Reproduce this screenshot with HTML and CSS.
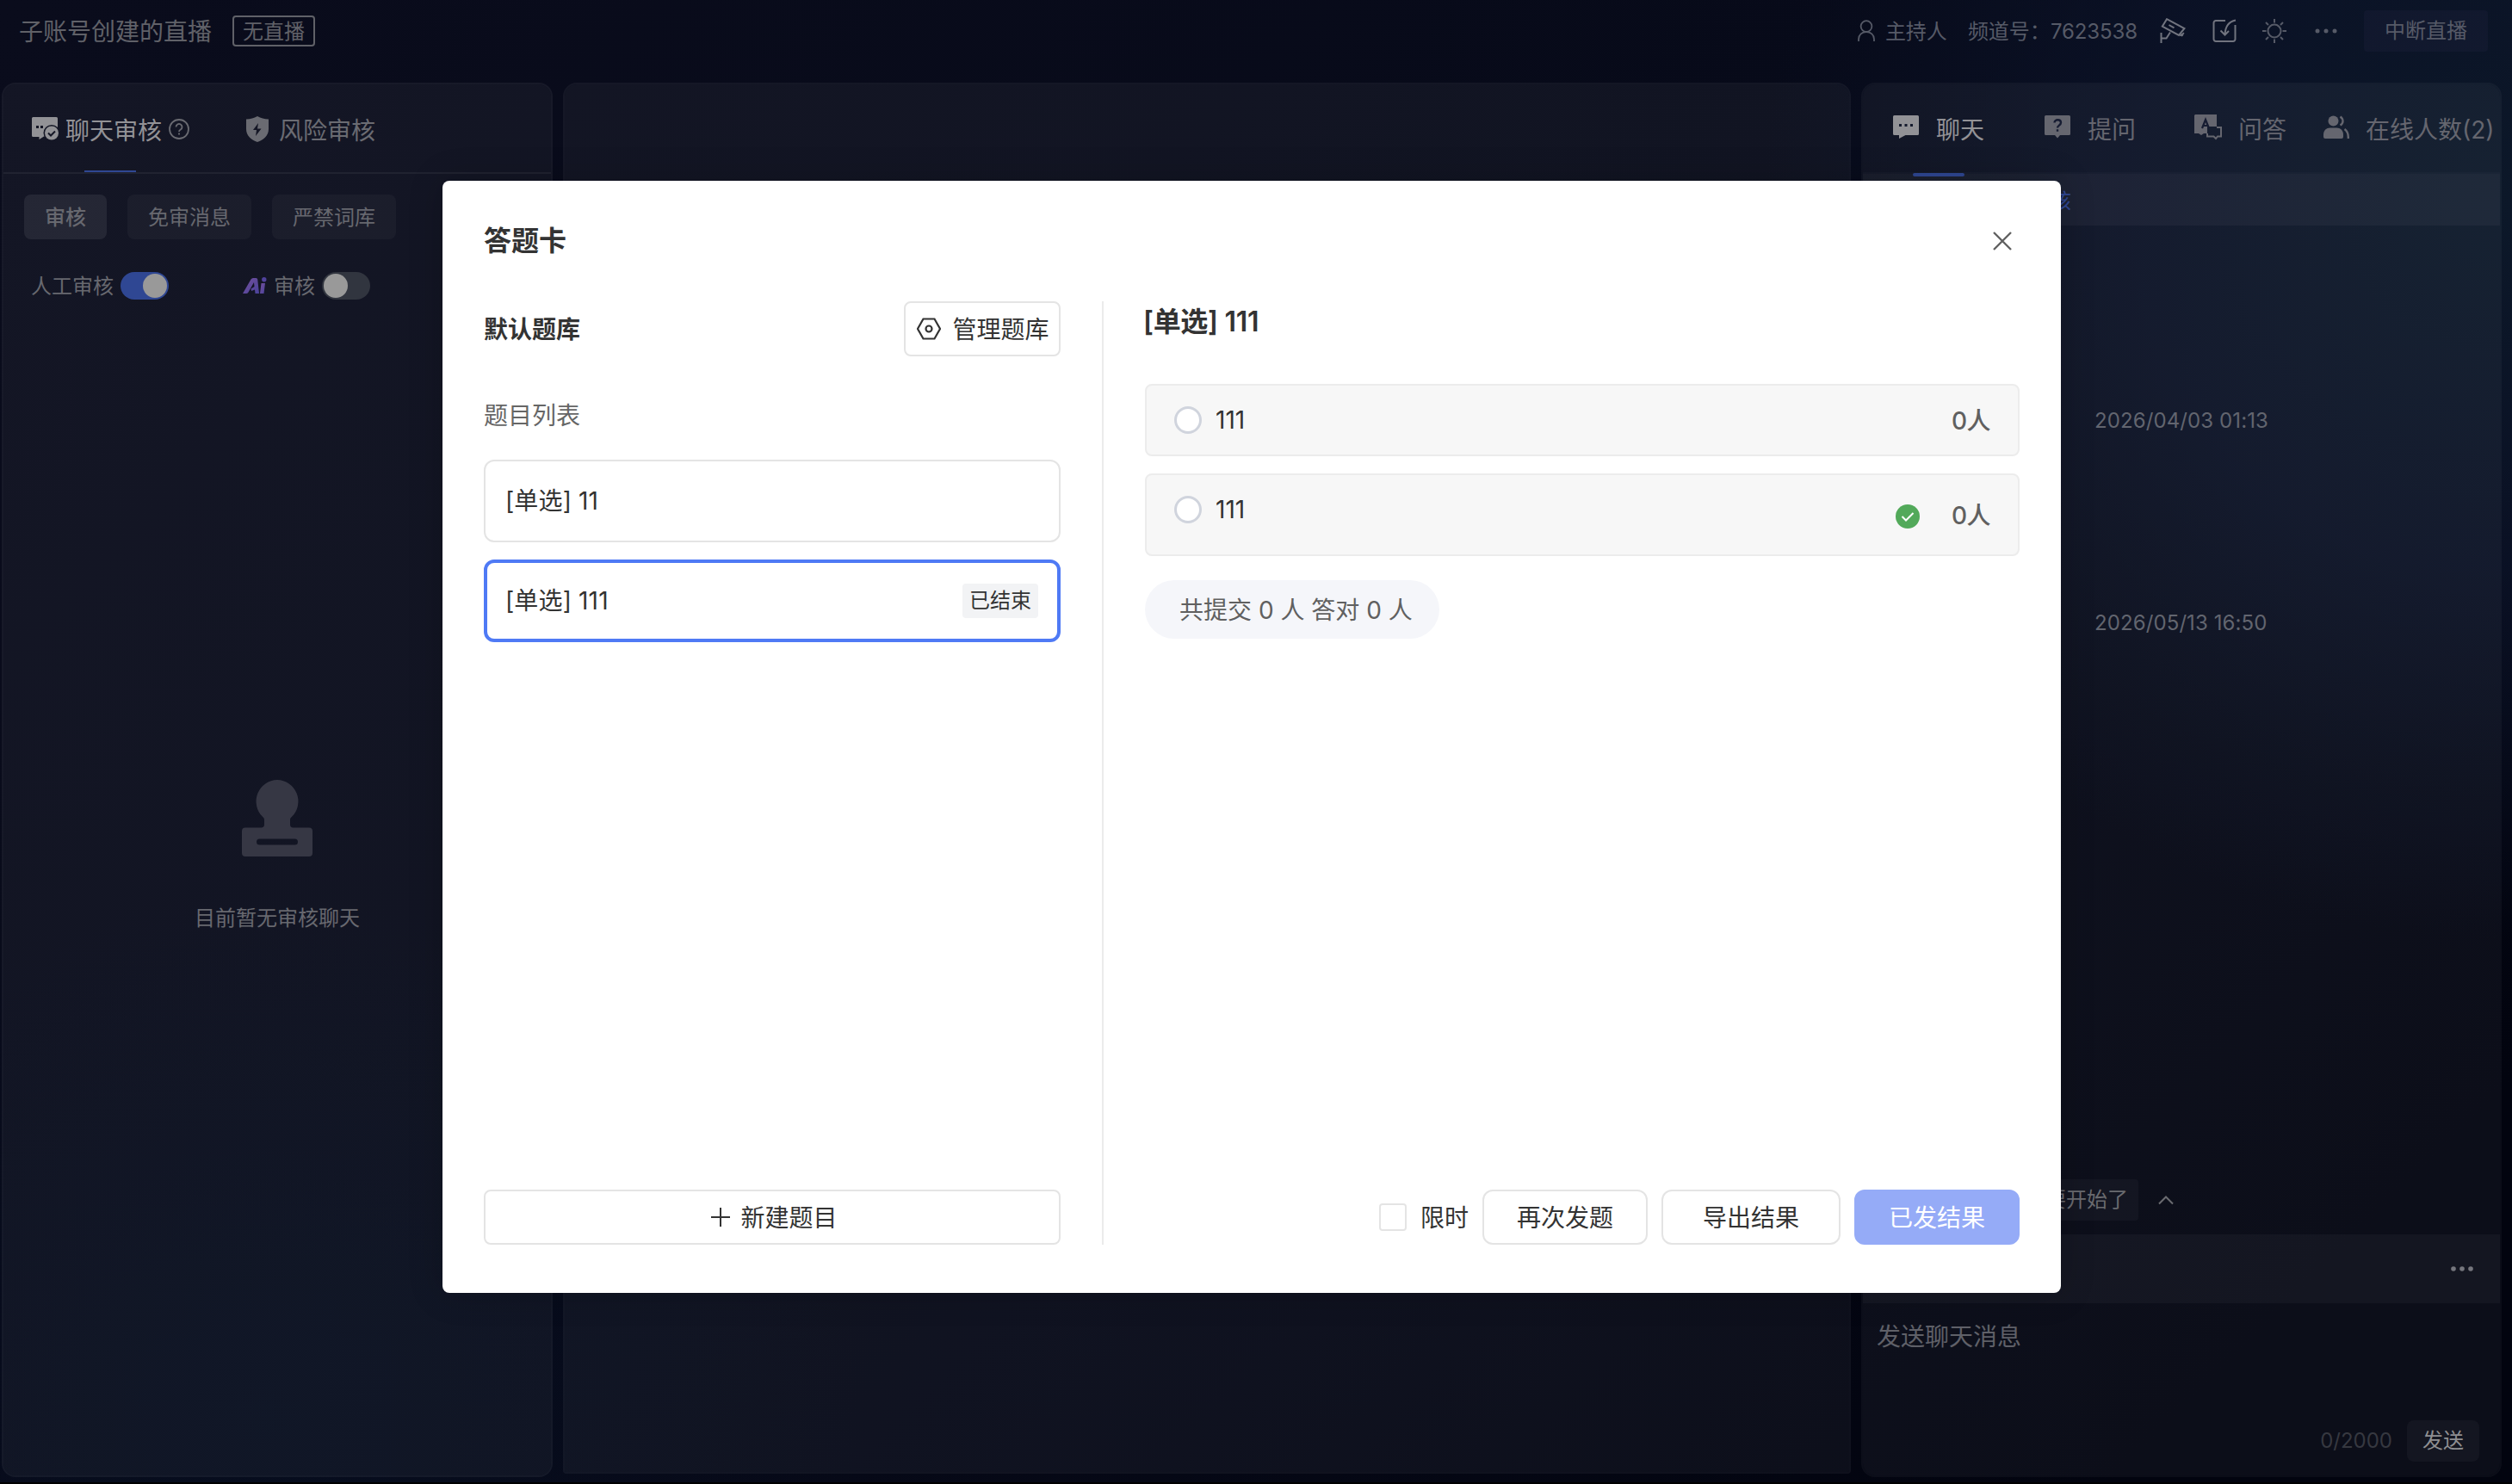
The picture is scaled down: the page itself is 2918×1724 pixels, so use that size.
FILE: index.html
```html
<!DOCTYPE html>
<html lang="zh-CN">
<head>
    <meta charset="UTF-8">
    <meta name="viewport" content="width=device-width, initial-scale=1.0">
    <title>答题卡</title>
    <link rel="stylesheet" href="styles.css">
</head>
<body>
    <div class="page">
        <header class="header">
            <h1 class="live-title">子账号创建的直播</h1>
            <span class="live-status">无直播</span>
            <div class="header-right">
                <svg class="icon-user" width="20" height="26" viewBox="0 0 20 26" fill="none" stroke="currentColor" stroke-width="1.8">
                    <circle cx="10" cy="7.6" r="6.4"/>
                    <path d="M1 25v-2.5c0-5 4-8.5 9-8.5s9 3.5 9 8.5V25"/>
                </svg>
                <span class="host">主持人</span>
                <span class="channel">频道号：<span class="channel-id">7623538</span></span>
                <svg class="icon-camera" width="30" height="30" viewBox="0 0 30 30" fill="none" stroke="currentColor" stroke-width="2">
                    <path d="M8 1.2 28.5 12 22 20 2.8 9.6z"/>
                    <path d="m10.5 8 6 3.4"/>
                    <path d="M1.5 17v12M1.5 23.5h6l4.500-7"/>
                    <path d="m23 20 3 1 2-4z" fill="currentColor" stroke-width="1"/>
                </svg>
                <svg class="icon-import" width="28" height="28" viewBox="0 0 28 28" fill="none" stroke="currentColor" stroke-width="2">
                    <path d="M15 2H4a2.5 2.5 0 0 0-2.5 2.5v19A2.5 2.5 0 0 0 4 26h20a2.5 2.5 0 0 0 2.5-2.5V7"/>
                    <path d="M27 1.5C19 3 15 8 14.5 18M9.5 13.5l5 5 4.5-4.5"/>
                </svg>
                <svg class="icon-sun" width="28" height="28" viewBox="0 0 28 28" fill="none" stroke="currentColor" stroke-width="2">
                    <circle cx="14" cy="14" r="7.5"/>
                    <path d="M14 0v4.5M14 23.5V28M0 14h4.5M23.5 14H28M4 4l3 3M21 21l3 3M24 4l-3 3M7 21l-3 3"/>
                </svg>
                <svg class="icon-more" width="26" height="6" viewBox="0 0 26 6" fill="currentColor">
                    <circle cx="3" cy="3" r="2.5"/><circle cx="13" cy="3" r="2.5"/><circle cx="23" cy="3" r="2.5"/>
                </svg>
                <button class="btn-stop">中断直播</button>
            </div>
        </header>

        <main class="main">
            <section class="panel panel-left">
                <div class="left-tabs">
                    <div class="left-tab active">
                        <svg class="icon-audit" width="32" height="28" viewBox="0 0 32 28">
                            <path fill="currentColor" d="M1.5 0h27A1.5 1.5 0 0 1 30 1.5v21H14L8.5 26v-3h-7A1.5 1.5 0 0 1 0 21.5v-20A1.5 1.5 0 0 1 1.5 0z"/>
                            <path fill="#141625" d="M5 10h3v3H5zM10 10h3v3h-3z"/>
                            <circle cx="23" cy="18.5" r="9.5" fill="#141625"/>
                            <circle cx="23" cy="18.5" r="8" fill="currentColor"/>
                            <path d="m19 18.500 3 3 5-5" fill="none" stroke="#141625" stroke-width="2"/>
                        </svg>
                        <span>聊天审核</span>
                        <svg class="icon-help" width="24" height="24" viewBox="0 0 24 24" fill="none" stroke="currentColor" stroke-width="1.8">
                            <circle cx="12" cy="12" r="11"/>
                            <path d="M8.5 9.5a3.5 3.5 0 1 1 5.3 3C12.5 13.3 12 13.8 12 15M12 16.6v2"/>
                        </svg>
                    </div>
                    <div class="left-tab">
                        <svg class="icon-shield" width="28" height="30" viewBox="0 0 28 30">
                            <path fill="currentColor" d="M14 0c4 2.200 8 3.300 13 3.500V15c0 8-6 12.500-13 15C7 27.500 1 23 1 15V3.500C6 3.300 10 2.200 14 0z"/>
                            <path fill="#141625" d="m15 8-6 8h4l-1 7 6.500-8.500H14z"/>
                        </svg>
                        <span>风险审核</span>
                    </div>
                </div>
                <div class="pills">
                    <span class="pill active">审核</span>
                    <span class="pill">免审消息</span>
                    <span class="pill">严禁词库</span>
                </div>
                <div class="switch-row">
                    <span>人工审核</span>
                    <span class="switch on"></span>
                    <svg class="icon-ai" width="28" height="20" viewBox="0 0 28 20">
                        <defs>
                            <linearGradient id="ai" x1="0" y1="0" x2="1" y2="1">
                                <stop offset="0" stop-color="#74509b"/>
                                <stop offset="1" stop-color="#4a429c"/>
                            </linearGradient>
                        </defs>
                        <g fill="url(#ai)">
                            <path d="M0 19 9.500 2.500Q10.500 1 12 1h3.500Q17 1 17.200 2.500L19 19h-4.500l-.500-4.500L10 16l-.500-2.500L13.500 11 13 6 6.500 17.500Q5.500 19 4 19z"/>
                            <path d="M21.500 7H26l-1.500 12H20z"/>
                        </g>
                        <circle cx="24.800" cy="2.800" r="2.700" fill="#50429c"/>
                    </svg>
                    <span>审核</span>
                    <span class="switch"></span>
                </div>
                <div class="empty">
                    <svg width="82" height="90" viewBox="0 0 82 90" fill="currentColor">
                        <path fill-rule="evenodd" d="M41 0a25 25 0 0 1 17 42.800c-1.500 1.300-2 2.200-2 4V52c0 2 1.300 3.500 3.500 3.500H78a4 4 0 0 1 4 4V85a4 4 0 0 1-4 4H4a4 4 0 0 1-4-4V59.500a4 4 0 0 1 4-4h18.500c2.200 0 3.500-1.500 3.500-3.500v-5.200c0-1.800-.500-2.700-2-4A25 25 0 0 1 41 0zM20.500 68.500a3.500 3.500 0 0 0 0 7h41a3.500 3.500 0 0 0 0-7z"/>
                    </svg>
                    <p>目前暂无审核聊天</p>
                </div>
            </section>

            <section class="panel panel-center"></section>

            <section class="panel panel-right">
                <div class="right-tabs">
                    <div class="right-tab active">
                        <svg width="30" height="28" viewBox="0 0 30 28">
                            <path fill="currentColor" d="M1.500 0h27A1.500 1.500 0 0 1 30 1.500v20a1.500 1.500 0 0 1-1.500 1.500H14.500L7 27v-4H1.500A1.500 1.500 0 0 1 0 21.500v-20A1.500 1.500 0 0 1 1.500 0z"/>
                            <path fill="#151b2e" d="M7 10h3v3H7zM13.500 10h3v3h-3zM20 10h3v3h-3z"/>
                        </svg>
                        <span>聊天</span>
                    </div>
                    <div class="right-tab">
                        <svg width="30" height="28" viewBox="0 0 30 28">
                            <path fill="currentColor" d="M1.500 0h27A1.500 1.500 0 0 1 30 1.500v20a1.500 1.500 0 0 1-1.500 1.500H18l-3 3.500L12 23H1.500A1.500 1.500 0 0 1 0 21.500v-20A1.500 1.500 0 0 1 1.500 0z"/>
                            <path d="M11.500 8.500c0-4.300 7.500-4.300 7.500 0 0 3-4 3.200-4 6M15 16.200v2.600" fill="none" stroke="#161c32" stroke-width="2.400"/>
                        </svg>
                        <span>提问</span>
                    </div>
                    <div class="right-tab">
                        <svg width="32" height="30" viewBox="0 0 32 30">
                            <path fill="currentColor" d="M1 0h25v14H15v8h-4l-3 2-3-2H0V1z"/>
                            <path d="m9 16 4-10 4 10M10.500 13h5" fill="none" stroke="#161c32" stroke-width="2.200"/>
                            <path d="M26 15h5v10.500h-4L25 28l-2.500-2.500H15V22" fill="none" stroke="currentColor" stroke-width="2"/>
                        </svg>
                        <span>问答</span>
                    </div>
                    <div class="right-tab">
                        <svg width="30" height="28" viewBox="0 0 30 28" fill="currentColor">
                            <circle cx="11.500" cy="6.500" r="6"/>
                            <path d="M0 25v-3c0-4.500 3.500-7.500 7.500-7.500h8c4 0 7.500 3 7.500 7.500v3a2 2 0 0 1-2 2H2a2 2 0 0 1-2-2z"/>
                            <path d="M19.500 1.500c4 3 4 7.500 0 10M24.500 16c3 2 4.500 5.500 4.300 11" fill="none" stroke="currentColor" stroke-width="2.400"/>
                        </svg>
                        <span>在线人数(2)</span>
                    </div>
                </div>
                <div class="notice">聊天消息需要审核</div>
                <div class="messages">
                    <time>2026/04/03 01:13</time>
                    <time>2026/05/13 16:50</time>
                    <div class="quick-reply">
                        <span class="quick-chip">直播马上要开始了</span>
                        <svg width="18" height="12" viewBox="0 0 18 12" fill="none" stroke="currentColor" stroke-width="2">
                            <path d="m1 10.500 8-8 8 8"/>
                        </svg>
                    </div>
                </div>
                <div class="toolbar">
                    <svg width="26" height="6" viewBox="0 0 26 6" fill="currentColor">
                        <circle cx="3" cy="3" r="2.800"/><circle cx="13" cy="3" r="2.800"/><circle cx="23" cy="3" r="2.800"/>
                    </svg>
                </div>
                <div class="editor">
                    <p class="placeholder">发送聊天消息</p>
                    <div class="editor-footer">
                        <span class="count">0/2000</span>
                        <button class="btn-send">发送</button>
                    </div>
                </div>
            </section>
        </main>
    </div>

    <div class="dialog">
        <div class="dialog-header">
            <h2>答题卡</h2>
            <svg class="close" width="24" height="24" viewBox="0 0 24 24" fill="none" stroke="currentColor" stroke-width="2.400">
                <path d="m2 2 20 20M22 2 2 22"/>
            </svg>
        </div>
        <div class="dialog-body">
            <div class="question-side">
                <div class="bank-row">
                    <strong>默认题库</strong>
                    <button class="btn btn-manage">
                        <svg width="28" height="26" viewBox="0 0 28 26" fill="none" stroke="currentColor" stroke-width="2.200">
                            <path d="M7.500 1.500h13L27 13l-6.500 11.500h-13L1 13z"/>
                            <circle cx="14" cy="13" r="3.500"/>
                        </svg>
                        <span>管理题库</span>
                    </button>
                </div>
                <div class="list-title">题目列表</div>
                <div class="question">[单选] 11</div>
                <div class="question selected">[单选] 111<span class="tag">已结束</span></div>
                <button class="btn btn-new">
                    <svg width="24" height="24" viewBox="0 0 24 24" fill="none" stroke="currentColor" stroke-width="2">
                        <path d="M12 1v22M1 12h22"/>
                    </svg>
                    <span>新建题目</span>
                </button>
            </div>
            <div class="result-side">
                <h3>[单选] 111</h3>
                <div class="option">
                    <span class="radio"></span>
                    <span class="option-text">111</span>
                    <span class="option-count">0人</span>
                </div>
                <div class="option correct">
                    <span class="radio"></span>
                    <span class="option-text">111</span>
                    <svg class="check" width="28" height="28" viewBox="0 0 28 28">
                        <circle cx="14" cy="14" r="14" fill="#52a95a"/>
                        <path d="m7.500 14 4.500 4.500 8.500-8.500" fill="none" stroke="#fff" stroke-width="2"/>
                    </svg>
                    <span class="option-count">0人</span>
                </div>
                <div class="summary">共提交 0 人 答对 0 人</div>
                <div class="actions">
                    <span class="checkbox"></span>
                    <span class="limit">限时</span>
                    <button class="btn"><span>再次发题</span></button>
                    <button class="btn btn-export"><span>导出结果</span></button>
                    <button class="btn btn-primary"><span>已发结果</span></button>
                </div>
            </div>
        </div>
    </div>
</body>
</html>
```

FILE: styles.css
```css
:root {
    --text: #333;
    --border: #e4e4e4;
    --primary: #4f7af5;
    --dim: #5d5f69;
    --line: rgba(255, 255, 255, 0.06);
}

* {
    margin: 0;
    padding: 0;
    box-sizing: border-box;
}

body {
    font-family: Inter, "Noto Sans CJK SC", sans-serif;
    font-size: 28px;
    line-height: 40px;
    color: var(--text);
    background-color: #05071a;
    overflow: hidden;
}

button {
    font: inherit;
    border: none;
}

svg {
    flex-shrink: 0;
}

.page {
    height: 1724px;
    display: flex;
    flex-direction: column;
    color: var(--dim);
    border-bottom: 2px solid #000;
    background:
        radial-gradient(ellipse 850px 850px at 2900px 240px, #0c1829 0%, rgba(12, 20, 42, 0.75) 50%, transparent 100%),
        radial-gradient(ellipse 700px 600px at 300px 1640px, rgba(6, 14, 32, 0.7) 0%, transparent 100%),
        linear-gradient(135deg, #0a0c1c 0%, #070a19 50%, #02040f 90%);
}

.header {
    height: 96px;
    padding: 12px 28px 36px 22px;
    display: flex;
    align-items: center;
}

.live-title {
    padding-top: 1px;
    font-size: 28px;
    font-weight: 400;
    color: #606168;
}

.live-status {
    margin-left: 24px;
    padding: 0 10px;
    height: 36px;
    line-height: 33px;
    font-size: 24px;
    color: #606168;
    border: 2px solid #606168;
    border-radius: 4px;
}

.header-right {
    margin-left: auto;
    display: flex;
    align-items: center;
    font-size: 24px;
    color: #565a67;
}

.host {
    margin-left: 12px;
    padding-top: 2px;
}

.channel {
    margin-left: 24px;
    padding-top: 2px;
}

.channel-id {
    letter-spacing: -0.1px;
}

.icon-camera {
    margin-left: 26px;
    color: #71747f;
}

.icon-import {
    margin-left: 31px;
    color: #71747f;
}

.icon-sun {
    margin-left: 30px;
}

.icon-more {
    margin-left: 33px;
}

.btn-stop {
    margin-left: 31px;
    width: 144px;
    height: 48px;
    color: #565a67;
    background-color: rgba(60, 50, 90, 0.14);
    border-radius: 4px;
}

.main {
    display: flex;
    align-items: flex-start;
    gap: 12px;
    padding: 0 12px 0 2px;
}

.panel {
    display: flex;
    flex-direction: column;
    border: 2px solid var(--line);
    border-radius: 16px;
    background-color: rgba(255, 255, 255, 0.042);
    background-clip: padding-box;
}

.panel-left {
    width: 640px;
    height: 1620px;
}

.panel-center {
    width: 1496px;
    height: 1616px;
    border-color: rgba(255, 255, 255, 0.05);
    border-radius: 16px 16px 4px 4px;
}

.panel-right {
    width: 744px;
    height: 1620px;
    border-color: rgba(255, 255, 255, 0.04);
}

.left-tabs {
    height: 104px;
    padding-left: 33px;
    display: flex;
    gap: 67px;
    border-bottom: 2px solid var(--line);
}

.left-tab {
    position: relative;
    display: flex;
    align-items: center;
    gap: 9px;
    padding-top: 2px;
    color: #6a6b72;
}

.left-tab span,
.right-tab span {
    padding-top: 3px;
}

.left-tab.active {
    color: #929296;
}

.left-tab.active::after {
    content: "";
    position: absolute;
    left: 61px;
    bottom: 0;
    width: 60px;
    height: 2px;
    background-color: #2f4793;
}

.icon-audit,
.icon-help {
    margin-right: -2px;
}

.icon-help {
    margin-left: -1px;
    color: #6a6b72;
}

.icon-shield {
    margin-right: 2px;
}

.pills {
    display: flex;
    gap: 24px;
    padding: 24px 24px 0;
}

.pill {
    height: 52px;
    padding: 0 24px;
    line-height: 53px;
    font-size: 24px;
    color: #67686f;
    background-color: rgba(255, 255, 255, 0.035);
    border-radius: 8px;
}

.pill.active {
    font-weight: 500;
    background-color: rgba(255, 255, 255, 0.075);
}

.switch-row {
    display: flex;
    align-items: center;
    height: 32px;
    margin-top: 38px;
    padding-left: 32px;
    font-size: 24px;
    color: #67686f;
}

.switch-row span:not(.switch) {
    padding-top: 2px;
}

.switch {
    width: 56px;
    height: 32px;
    margin-left: 8px;
    padding: 2px;
    display: flex;
    background-color: #31353f;
    border-radius: 16px;
}

.switch::before {
    content: "";
    width: 28px;
    height: 28px;
    background-color: #999;
    border-radius: 50%;
}

.switch.on {
    background-color: #2f4793;
    justify-content: flex-end;
}

.icon-ai {
    margin: 0 8px 0 86px;
}

.empty {
    margin-top: 558px;
    display: flex;
    flex-direction: column;
    align-items: center;
    color: #363744;
}

.empty p {
    margin-top: 51px;
    font-size: 24px;
    color: #67686f;
}

.right-tabs {
    height: 104px;
    padding-left: 35px;
    display: flex;
    border-bottom: 2px solid rgba(255, 255, 255, 0.02);
}

.right-tab {
    position: relative;
    display: flex;
    align-items: center;
    gap: 20px;
    margin-right: 70px;
    color: #65666f;
    white-space: nowrap;
}

.right-tab svg {
    margin-bottom: 2px;
}

.right-tab:nth-child(2) {
    margin-right: 68px;
}

.right-tab:nth-child(3) {
    gap: 19px;
    margin-right: 43px;
}

.right-tab:nth-child(4) {
    gap: 19px;
    margin-right: 0;
}

.right-tab.active {
    color: #929296;
}

.right-tab.active::after {
    content: "";
    position: absolute;
    left: 23px;
    bottom: -5px;
    width: 60px;
    height: 4px;
    background-color: #2f4793;
    border-radius: 2px;
}

.notice {
    height: 60px;
    line-height: 63px;
    padding-left: 50px;
    font-size: 24px;
    color: #2f4793;
    background-color: rgba(255, 255, 255, 0.04);
}

.messages {
    position: relative;
    height: 1172px;
    display: flex;
    flex-direction: column;
    gap: 195px;
    padding: 207px 0 0 269px;
}

.messages time {
    font-size: 24px;
    letter-spacing: 0.1px;
    color: #62656f;
}

.quick-reply {
    position: absolute;
    left: 90px;
    bottom: 16px;
    display: flex;
    align-items: center;
    gap: 23px;
    font-size: 24px;
    color: #6a6b70;
}

.quick-chip {
    height: 48px;
    line-height: 48px;
    padding: 0 12px 0 26px;
    background-color: rgba(255, 255, 255, 0.03);
    border-radius: 4px;
}

.toolbar {
    height: 80px;
    padding-right: 31px;
    display: flex;
    align-items: center;
    justify-content: flex-end;
    color: #75767d;
    background-color: rgba(255, 255, 255, 0.035);
}

.editor {
    flex: 1;
    display: flex;
    flex-direction: column;
    justify-content: space-between;
    padding: 19px 24px 16px 16px;
}

.placeholder {
    color: #5f6068;
}

.editor-footer {
    display: flex;
    align-items: center;
    justify-content: flex-end;
    gap: 17px;
    font-size: 24px;
}

.count {
    color: #363840;
}

.btn-send {
    width: 84px;
    height: 48px;
    color: #8f8f92;
    background-color: rgba(255, 255, 255, 0.035);
    border-radius: 8px;
}

.dialog {
    position: absolute;
    left: 514px;
    top: 210px;
    width: 1880px;
    height: 1292px;
    padding: 48px 48px 56px;
    display: flex;
    flex-direction: column;
    background-color: #fff;
    border-radius: 8px;
    box-shadow: 0 0 40px rgba(0, 0, 0, 0.2);
}

.dialog-header {
    height: 44px;
    display: flex;
    align-items: center;
    justify-content: space-between;
    padding-right: 8px;
}

.dialog-header h2 {
    font-size: 32px;
    font-weight: 600;
}

.close {
    color: #606060;
}

.dialog-body {
    flex: 1;
    margin-top: 48px;
    display: flex;
}

.question-side {
    width: 670px;
    display: flex;
    flex-direction: column;
}

.bank-row {
    display: flex;
    align-items: center;
    justify-content: space-between;
}

.bank-row strong {
    padding-top: 2px;
    font-weight: 600;
}

.btn {
    width: 192px;
    height: 64px;
    display: flex;
    align-items: center;
    justify-content: center;
    color: var(--text);
    background-color: #fff;
    border: 2px solid var(--border);
    border-radius: 12px;
}

.btn span,
.limit {
    padding-top: 2px;
}

.btn-manage {
    width: 182px;
    gap: 13px;
    padding-left: 2px;
    border-radius: 8px;
}

.list-title {
    margin: 49px 0 31px;
    color: #666;
}

.question {
    height: 96px;
    margin-bottom: 20px;
    padding: 0 24px 0 23px;
    display: flex;
    align-items: center;
    justify-content: space-between;
    letter-spacing: 0.15px;
    border: 2px solid var(--border);
    border-radius: 12px;
}

.question.selected {
    padding: 0 22px 0 21px;
    border: 4px solid var(--primary);
}

.tag {
    padding: 0 8px;
    font-size: 24px;
    letter-spacing: 0;
    background-color: #f2f3f5;
    border-radius: 4px;
}

.btn-new {
    width: 100%;
    margin-top: auto;
    padding-left: 4px;
    gap: 11px;
    border-radius: 8px;
}

.result-side {
    flex: 1;
    margin-left: 48px;
    padding-left: 48px;
    display: flex;
    flex-direction: column;
    border-left: 2px solid #ebebeb;
}

.result-side h3 {
    height: 48px;
    line-height: 48px;
    margin: 0 0 48px -2px;
    font-size: 32px;
    font-weight: 600;
    letter-spacing: -0.3px;
}

.option {
    height: 84px;
    margin-bottom: 20px;
    padding: 0 32px;
    display: flex;
    align-items: center;
    background-color: #f7f7f7;
    border: 2px solid #ececec;
    border-radius: 8px;
}

.option.correct {
    height: 96px;
    margin-bottom: 28px;
}

.option.correct .radio,
.option.correct .option-text {
    margin-bottom: 12px;
}

.radio {
    width: 32px;
    height: 32px;
    background-color: #fff;
    border: 3px solid #d0d4dd;
    border-radius: 50%;
}

.option-text {
    margin-left: 16px;
    margin-right: auto;
}

.check {
    margin: 4px 37px 0 0;
}

.option-count {
    padding-top: 1px;
    font-weight: 500;
    letter-spacing: -0.5px;
    color: #606060;
}

.summary {
    align-self: flex-start;
    height: 68px;
    line-height: 70px;
    padding: 0 31px 0 40px;
    color: #606060;
    background-color: #f5f6fa;
    border-radius: 34px;
}

.actions {
    margin-top: auto;
    display: flex;
    align-items: center;
    justify-content: flex-end;
    gap: 16px;
}

.checkbox {
    width: 32px;
    height: 32px;
    border: 2px solid var(--border);
    border-radius: 4px;
}

.btn-export {
    width: 208px;
}

.btn-primary {
    color: #fff;
    background-color: #95abf7;
    border-color: #95abf7;
}
```
